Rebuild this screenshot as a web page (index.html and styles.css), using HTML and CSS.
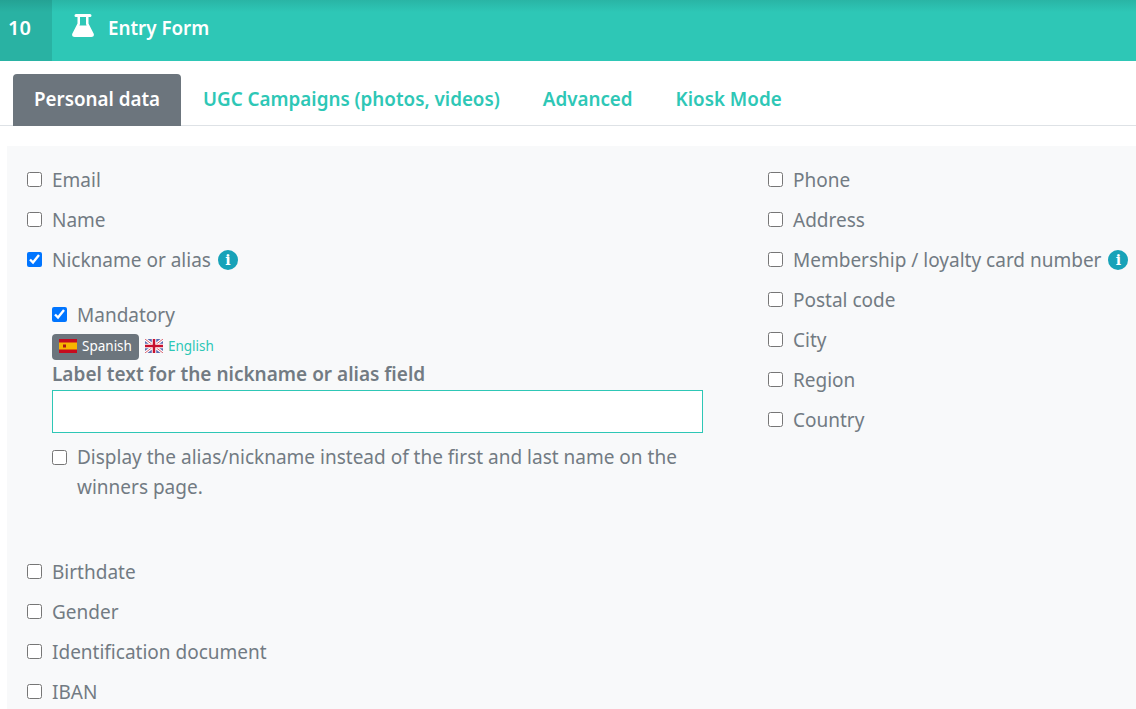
FILE: index.html
```html
<!DOCTYPE html>
<html lang="en">
<head>
    <meta charset="UTF-8">
    <meta name="viewport" content="width=device-width, initial-scale=1.0">
    <title>Entry Form</title>
    <link rel="stylesheet" href="styles.css">
</head>
<body>
    <header class="topbar">
        <div class="step">10</div>
        <svg class="flask" viewBox="0 0 22 23" width="22" height="23">
            <path fill="#fff" fill-rule="evenodd" d="M4 0h14a1.500 1.500 0 0 1 0 3h-1.500v6.500l5.100 10c.9 1.800-.3 3.500-2.300 3.500H2.700C.7 23-.5 21.300.4 19.500l5.100-10V3H4a1.500 1.500 0 0 1 0-3zM8 3v7l-.6 1.500h7.200L14 10V3z"/>
        </svg>
        <h1 class="title">Entry Form</h1>
    </header>

    <nav class="tabs">
        <a class="tab active" href="#">Personal data</a>
        <a class="tab" href="#">UGC Campaigns (photos, videos)</a>
        <a class="tab" href="#">Advanced</a>
        <a class="tab" href="#">Kiosk Mode</a>
    </nav>

    <main class="panel">
        <div class="col col-left">
            <label class="check"><input type="checkbox"> Email</label>
            <label class="check"><input type="checkbox"> Name</label>
            <label class="check"><input type="checkbox" checked> Nickname or alias <span class="info">i</span></label>

            <div class="nested">
                <label class="check"><input type="checkbox" checked> Mandatory</label>
                <div class="langs">
                    <span class="lang selected">
                        <svg class="flag" viewBox="0 0 18 14" width="18" height="14">
                            <rect width="18" height="14" fill="#c60b1e"/>
                            <rect y="3.500" width="18" height="7" fill="#f7b500"/>
                            <rect x="4" y="5.500" width="3" height="3" fill="#ad1519"/>
                        </svg>
                        Spanish
                    </span>
                    <span class="lang">
                        <svg class="flag" viewBox="0 0 18 14" width="18" height="14">
                            <rect width="18" height="14" fill="#5a6bb0"/>
                            <path d="M0 0l18 14M18 0L0 14" stroke="#fff" stroke-width="3"/>
                            <path d="M0 0l18 14M18 0L0 14" stroke="#d8606e" stroke-width="1"/>
                            <path d="M9 0v14M0 7h18" stroke="#fff" stroke-width="4.500"/>
                            <path d="M9 0v14M0 7h18" stroke="#c8102e" stroke-width="2.500"/>
                        </svg>
                        English
                    </span>
                </div>
                <div class="field-label">Label text for the nickname or alias field</div>
                <input class="field" type="text">
                <label class="check check-wrap"><input type="checkbox"> <span>Display the alias/nickname instead of the first and last name on the winners page.</span></label>
            </div>

            <label class="check"><input type="checkbox"> Birthdate</label>
            <label class="check"><input type="checkbox"> Gender</label>
            <label class="check"><input type="checkbox"> Identification document</label>
            <label class="check"><input type="checkbox"> IBAN</label>
        </div>
        <div class="col col-right">
            <label class="check"><input type="checkbox"> Phone</label>
            <label class="check"><input type="checkbox"> Address</label>
            <label class="check"><input type="checkbox"> Membership / loyalty card number <span class="info">i</span></label>
            <label class="check"><input type="checkbox"> Postal code</label>
            <label class="check"><input type="checkbox"> City</label>
            <label class="check"><input type="checkbox"> Region</label>
            <label class="check"><input type="checkbox"> Country</label>
        </div>
    </main>
</body>
</html>
```

FILE: styles.css
```css
html, body {
    height: 709px;
    overflow: hidden;
}
body {
    margin: 0;
    font-family: "Noto Sans", Arial, sans-serif;
    font-size: 19px;
    color: #727b83;
    background-color: #fff;
}
.topbar {
    display: flex;
    align-items: center;
    height: 61px;
    background: linear-gradient(#29b5a5, #2ec7b6 12px);
    color: #fff;
}
.step {
    width: 52px;
    height: 100%;
    box-sizing: border-box;
    padding: 14px 0 0 8px;
    background-color: rgba(0, 0, 0, 0.1);
    font-size: 20px;
    font-weight: 600;
}
.flask {
    margin: 0 0 10px 20px;
}
.title {
    margin: 0 0 6px 14px;
    font-size: 18.800px;
    font-weight: 600;
}
.tabs {
    display: flex;
    gap: 1px;
    margin-top: 13px;
    padding-left: 13px;
    height: 51px;
    border-bottom: 1px solid #dee2e6;
}
.tab {
    padding: 12px 21px 0;
    height: 40px;
    color: #2ec7b6;
    font-size: 18.800px;
    font-weight: 600;
    text-decoration: none;
}
.tab.active {
    background-color: #6c757d;
    color: #fff;
    border-radius: 4px 4px 0 0;
}
.panel {
    display: flex;
    box-sizing: border-box;
    margin: 20px 0 0 7px;
    padding: 14px 0 0 20px;
    background-color: #f8f9fa;
    height: 563px;
    overflow: hidden;
}
.col-left {
    width: 741px;
    flex: none;
}
.check {
    display: flex;
    align-items: center;
    gap: 10px;
    height: 40px;
    white-space: nowrap;
}
.check input {
    width: 15px;
    height: 15px;
    margin: 0 0 2px;
    flex: none;
    accent-color: #0075ff;
}
.info {
    display: inline-block;
    width: 20px;
    height: 20px;
    margin-left: -3px;
    border-radius: 50%;
    background-color: #17a2b8;
    color: #fff;
    font: bold 14px/20px "DejaVu Serif", serif;
    text-align: center;
}
.nested {
    padding: 15px 0 50px 25px;
    width: 651px;
}
.langs {
    display: flex;
    align-items: center;
    gap: 6px;
    margin-top: -1px;
    height: 26px;
    font-size: 13.500px;
}
.lang {
    display: flex;
    align-items: center;
    box-sizing: border-box;
    gap: 5px;
    height: 26px;
    padding-bottom: 2px;
    color: #2ec7b6;
}
.lang.selected {
    padding: 0 7px 2px;
    background-color: #6c757d;
    color: #fff;
    border-radius: 4px;
}
.field-label {
    margin-top: 1px;
    font-weight: 600;
    line-height: 27px;
}
.field {
    display: block;
    box-sizing: border-box;
    width: 100%;
    height: 43px;
    margin-top: 2px;
    border: 1px solid #2ec7b6;
    background-color: #fff;
}
.check-wrap {
    align-items: flex-start;
    white-space: normal;
    height: auto;
    margin-top: 9px;
    line-height: 30px;
}
.check-wrap input {
    margin-top: 8px;
}
```
